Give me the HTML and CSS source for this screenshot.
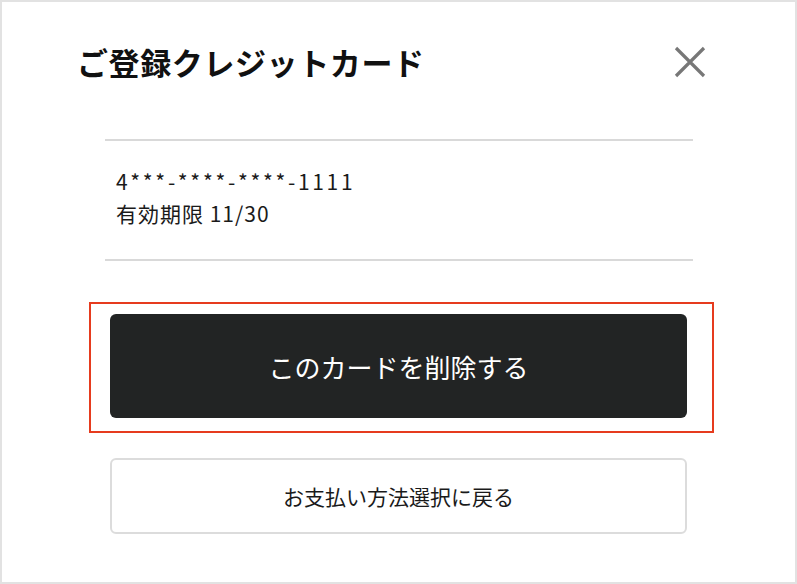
FILE: index.html
```html
<!DOCTYPE html>
<html lang="ja">
<head>
<meta charset="UTF-8">
<meta name="viewport" content="width=device-width, initial-scale=1.0">
<title>ご登録クレジットカード</title>
<link rel="stylesheet" href="styles.css">
</head>
<body>

<div class="modal">
    <div class="modal-header">
        <h1 class="modal-title">ご登録クレジットカード</h1>
        <button type="button" class="close-button" aria-label="閉じる">
            <svg width="32" height="32" viewBox="0 0 32 32">
                <path d="M2 2 L30 30 M30 2 L2 30" stroke="#777" stroke-width="3.2" fill="none"/>
            </svg>
        </button>
    </div>

    <div class="card-info">
        <p class="card-number">4***-****-****-1111</p>
        <p class="card-expiry">有効期限 11/30</p>
    </div>

    <div class="actions">
        <div class="delete-wrap">
            <button type="button" class="btn btn-delete">このカードを削除する</button>
            <!-- annotation box drawn over the delete button -->
            <div class="highlight"></div>
        </div>
        <button type="button" class="btn btn-back">お支払い方法選択に戻る</button>
    </div>
</div>

</body>
</html>
```

FILE: styles.css
```css
/* Basic reset */
* {
    box-sizing: border-box;
}

body {
    margin: 0;
    font-family: "Noto Sans CJK JP", "Noto Sans", sans-serif;
    color: #1a1a1a;
    background-color: #fff;
}

/* Modal frame */
.modal {
    width: 797px;
    height: 584px;
    border: 2px solid #e2e2e2;
    padding-top: 44px;
}

/* Header */
.modal-header {
    display: flex;
    justify-content: space-between;
    align-items: center;
    height: 32px;
    margin: 0 89px 0 75px;
}

.modal-title {
    margin: 0;
    font-size: 31px;
    line-height: 32px;
    font-weight: bold;
    letter-spacing: 0.6px;
    color: #111;
}

.close-button {
    width: 32px;
    height: 32px;
    padding: 0;
    border: none;
    background: none;
    cursor: pointer;
}

.close-button svg {
    display: block;
}

/* Registered card */
.card-info {
    width: 588px;
    margin: 61px 0 0 103px;
    padding: 24px 11px 30px;
    border-top: 2px solid #d9d9d9;
    border-bottom: 2px solid #d9d9d9;
}

.card-info p {
    margin: 0;
    font-size: 21px;
    line-height: 32px;
}

.card-number {
    letter-spacing: 2.7px;
}

.card-expiry {
    letter-spacing: 1px;
}

/* Buttons */
.actions {
    display: flex;
    flex-direction: column;
    gap: 40px;
    width: 577px;
    margin: 53px 0 0 108px;
}

.delete-wrap {
    position: relative;
}

.btn {
    display: block;
    width: 100%;
    font-family: inherit;
    border-radius: 6px;
    cursor: pointer;
}

.btn-delete {
    height: 104px;
    border: none;
    background-color: #222424;
    color: #fff;
    font-size: 26px;
}

.btn-back {
    height: 76px;
    border: 2px solid #dcdcdc;
    background-color: #fff;
    color: #1a1a1a;
    font-size: 21px;
}

.highlight {
    position: absolute;
    top: -12px;
    left: -21px;
    width: 625px;
    height: 131px;
    border: 2px solid #e63b1e;
    pointer-events: none;
}
```
